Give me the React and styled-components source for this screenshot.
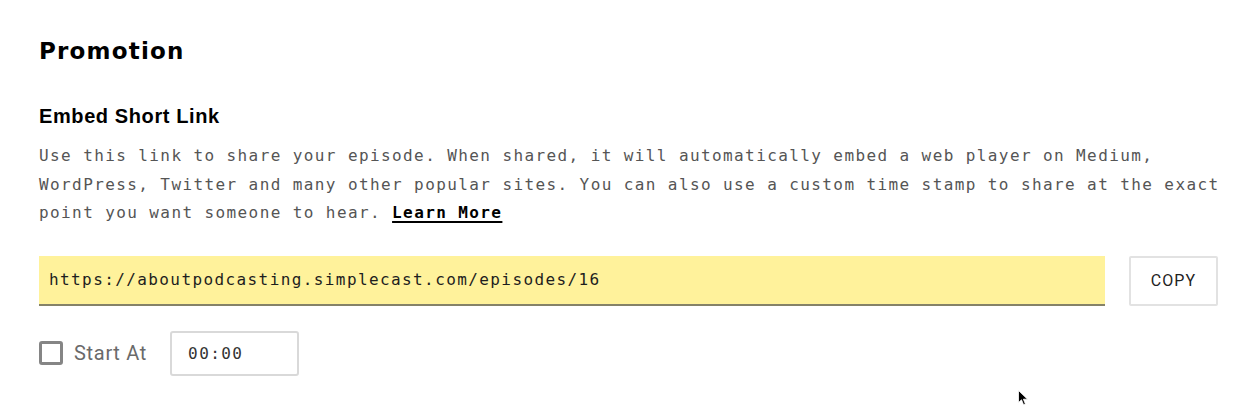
import React from "react";
import styled, { createGlobalStyle } from "styled-components";

const Global = createGlobalStyle`
  html, body { margin: 0; padding: 0; background: #fff; }
  body { width: 1258px; height: 420px; overflow: hidden; }
`;

const Page = styled.div`
  position: relative;
  box-sizing: border-box;
  width: 1258px;
  height: 420px;
  padding: 36px 37px 0 39px;
`;

const Title = styled.h1`
  margin: 0;
  font-family: "DejaVu Sans", sans-serif;
  font-weight: 700;
  font-size: 23px;
  line-height: 30px;
  letter-spacing: 1.2px;
  color: #000;
`;

const Subtitle = styled.h2`
  margin: 38px 0 0;
  font-family: "Liberation Sans", Arial, sans-serif;
  font-weight: 700;
  font-size: 20px;
  line-height: 24px;
  letter-spacing: 0.6px;
  color: #000;
`;

const Text = styled.p`
  margin: 14px 0 0;
  font-family: "DejaVu Sans Mono", monospace;
  font-size: 16px;
  line-height: 28.5px;
  letter-spacing: 1.4px;
  color: #555;
`;

const LearnMore = styled.a`
  color: #000;
  font-weight: 700;
  text-decoration: underline;
  text-underline-offset: 3px;
  text-decoration-thickness: 2px;
`;

const LinkRow = styled.div`
  display: flex;
  gap: 24px;
  margin-top: 28px;
  height: 50px;
`;

const UrlField = styled.div`
  flex: 0 0 1066px;
  box-sizing: border-box;
  display: flex;
  align-items: center;
  padding: 0 10px;
  background: #fff29b;
  border-bottom: 2px solid #858268;
  font-family: "DejaVu Sans Mono", monospace;
  font-size: 16px;
  letter-spacing: 1.4px;
  color: #1e1e1e;
`;

const CopyButton = styled.button`
  flex: 0 0 89px;
  box-sizing: border-box;
  height: 50px;
  background: #fff;
  border: 2px solid #e2e2e2;
  border-radius: 2px;
  font-family: Roboto, "Liberation Sans", sans-serif;
  font-size: 16px;
  letter-spacing: 1.1px;
  color: #222;
  padding: 0;
`;

const StartRow = styled.div`
  display: flex;
  align-items: center;
  margin-top: 25px;
`;

const Check = styled.span`
  box-sizing: border-box;
  width: 24px;
  height: 24px;
  border: 3px solid #858585;
  border-radius: 3px;
`;

const Label = styled.span`
  margin-left: 11px;
  font-family: Roboto, "Liberation Sans", sans-serif;
  font-size: 20px;
  letter-spacing: 0.7px;
  color: #6a6a6a;
`;

const TimeField = styled.div`
  box-sizing: border-box;
  margin-left: 23px;
  width: 129px;
  height: 45px;
  display: flex;
  align-items: center;
  padding-left: 16px;
  border: 2px solid #d9d9d9;
  border-radius: 3px;
  font-family: "DejaVu Sans Mono", monospace;
  font-size: 16px;
  letter-spacing: 1.4px;
  color: #333;
`;

const Cursor = styled.svg`
  position: absolute;
  left: 1018px;
  top: 390px;
`;

export default function App() {
  return (
    <>
      <Global />
      <Page>
        <Title>Promotion</Title>
        <Subtitle>Embed Short Link</Subtitle>
        <Text>
          Use this link to share your episode. When shared, it will automatically embed a web
          player on Medium, WordPress, Twitter and many other popular sites. You can also use a
          custom time stamp to share at the exact point you want someone to hear.{" "}
          <LearnMore href="#">Learn More</LearnMore>
        </Text>
        <LinkRow>
          <UrlField>https://aboutpodcasting.simplecast.com/episodes/16</UrlField>
          <CopyButton>COPY</CopyButton>
        </LinkRow>
        <StartRow>
          <Check />
          <Label>Start At</Label>
          <TimeField>00:00</TimeField>
        </StartRow>
        <Cursor width="11" height="16" viewBox="0 0 11 16">
          <path d="M0.5 0.5 L0.5 12.5 L3.5 9.8 L5.6 14.8 L7.4 14 L5.4 9.2 L9.5 9.2 Z" fill="#000" stroke="#fff" strokeWidth="0.8" />
        </Cursor>
      </Page>
    </>
  );
}
